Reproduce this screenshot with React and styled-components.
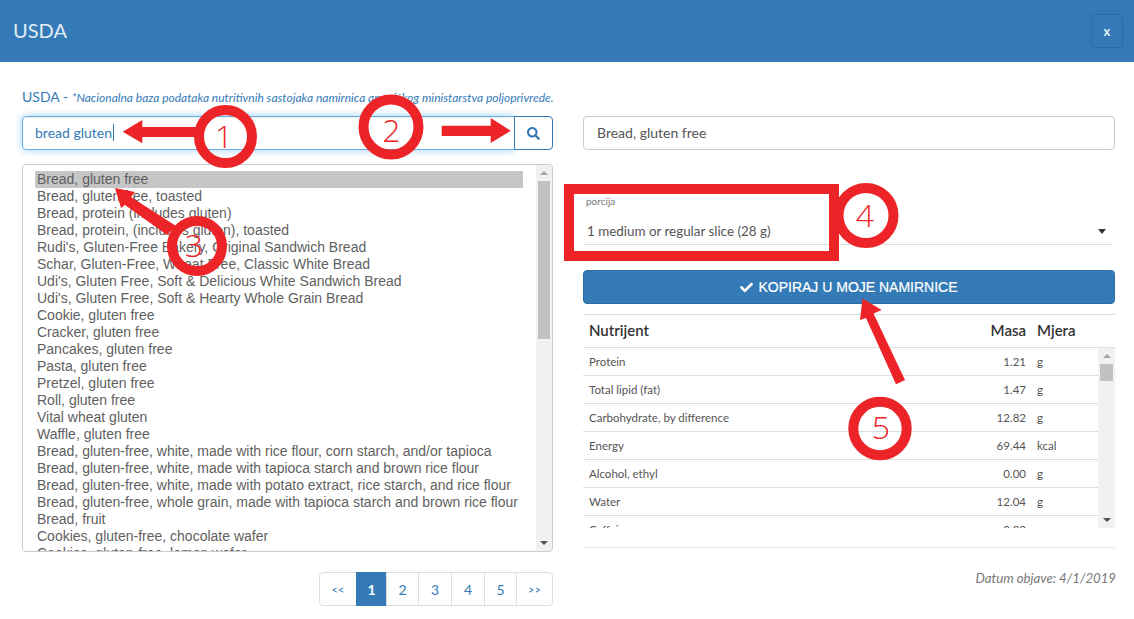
import React from 'react';
import styled, { createGlobalStyle } from 'styled-components';
import { FaSearch, FaCheck } from 'react-icons/fa';

const BLUE = '#337ab7';
const RED = '#ed2427';

const FOODS = [
    'Bread, gluten free',
    'Bread, gluten free, toasted',
    'Bread, protein (includes gluten)',
    'Bread, protein, (includes gluten), toasted',
    "Rudi's, Gluten-Free Bakery, Original Sandwich Bread",
    'Schar, Gluten-Free, Wheat Free, Classic White Bread',
    "Udi's, Gluten Free, Soft & Delicious White Sandwich Bread",
    "Udi's, Gluten Free, Soft & Hearty Whole Grain Bread",
    'Cookie, gluten free',
    'Cracker, gluten free',
    'Pancakes, gluten free',
    'Pasta, gluten free',
    'Pretzel, gluten free',
    'Roll, gluten free',
    'Vital wheat gluten',
    'Waffle, gluten free',
    'Bread, gluten-free, white, made with rice flour, corn starch, and/or tapioca',
    'Bread, gluten-free, white, made with tapioca starch and brown rice flour',
    'Bread, gluten-free, white, made with potato extract, rice starch, and rice flour',
    'Bread, gluten-free, whole grain, made with tapioca starch and brown rice flour',
    'Bread, fruit',
    'Cookies, gluten-free, chocolate wafer',
    'Cookies, gluten-free, lemon wafer',
];

const NUTRIENTS = [
    { name: 'Protein', mass: '1.21', unit: 'g' },
    { name: 'Total lipid (fat)', mass: '1.47', unit: 'g' },
    { name: 'Carbohydrate, by difference', mass: '12.82', unit: 'g' },
    { name: 'Energy', mass: '69.44', unit: 'kcal' },
    { name: 'Alcohol, ethyl', mass: '0.00', unit: 'g' },
    { name: 'Water', mass: '12.04', unit: 'g' },
    { name: 'Caffeine', mass: '0.00', unit: 'mg' },
];

const PAGES = [
    { label: '<<', cell: 38, small: true },
    { label: '1', cell: 31, active: true },
    { label: '2', cell: 33 },
    { label: '3', cell: 34 },
    { label: '4', cell: 34 },
    { label: '5', cell: 33 },
    { label: '>>', cell: 37, small: true },
];

const GlobalStyle = createGlobalStyle`
    html, body {
        margin: 0;
        padding: 0;
        background: #fff;
    }
    body {
        font-family: 'Lato', 'Liberation Sans', sans-serif;
        color: #555;
    }
`;

const Page = styled.div`
    position: relative;
    width: 1134px;
    height: 619px;
    overflow: hidden;
    background: #fff;
`;
const Header = styled.header`
    display: flex;
    align-items: center;
    justify-content: space-between;
    height: 62px;
    padding: 0 11px 0 13px;
    box-sizing: border-box;
    background: ${BLUE};
`;
const Title = styled.h1`
    margin: 0 0 2px;
    font-size: 20px;
    font-weight: 400;
    color: #e4edf5;
`;
const CloseButton = styled.button`
    width: 32px;
    height: 34px;
    padding: 0;
    border: 1px solid #2e6da4;
    border-radius: 4px;
    background: ${BLUE};
    color: #e8eff6;
    font-family: inherit;
    font-size: 13px;
    font-weight: 700;
`;
const Body = styled.div`
    display: grid;
    grid-template-columns: 531px 532px;
    column-gap: 30px;
    padding-left: 22px;
`;
const LeftColumn = styled.section`
    display: flex;
    flex-direction: column;
    padding-top: 26px;
`;
const RightColumn = styled.section`
    display: flex;
    flex-direction: column;
    padding-top: 54px;
`;
const Intro = styled.div`
    height: 18px;
    margin-bottom: 10px;
    font-size: 14px;
    line-height: 18px;
    white-space: nowrap;
    color: ${BLUE};
`;
const IntroNote = styled.em`
    font-size: 12px;
`;
const SearchGroup = styled.div`
    display: flex;
    height: 34px;
    margin-bottom: 14px;
`;
const SearchInput = styled.div`
    flex: 1;
    display: flex;
    align-items: center;
    padding: 0 0 1px 12px;
    border: 1px solid #66afe9;
    border-radius: 4px 0 0 4px;
    box-shadow: inset 0 1px 1px rgba(0, 0, 0, 0.075), 0 0 8px rgba(102, 175, 233, 0.6);
    font-size: 14px;
    color: ${BLUE};
`;
const Caret = styled.span`
    width: 1px;
    height: 17px;
    margin-left: 1px;
    background: ${BLUE};
`;
const SearchButton = styled.button`
    display: flex;
    align-items: center;
    justify-content: center;
    width: 39px;
    margin-left: -1px;
    padding: 0;
    border: 1px solid ${BLUE};
    border-radius: 0 4px 4px 0;
    background: #fff;
    color: ${BLUE};
    font-size: 13px;
`;
const ListBox = styled.div`
    display: flex;
    height: 388px;
    box-sizing: border-box;
    border: 1px solid #ccc;
    border-radius: 4px;
    overflow: hidden;
    font-family: 'Liberation Sans', Arial, sans-serif;
    font-size: 14px;
    line-height: 17px;
    color: #5f5f5f;
`;
const ListItems = styled.div`
    flex: 1;
    padding: 6px 13px 0 12px;
    overflow: hidden;
`;
const ListItem = styled.div`
    padding: 0 2px;
    white-space: nowrap;
    background: ${({ selected }) => (selected ? '#c6c6c6' : 'transparent')};
`;
const Scrollbar = styled.div`
    display: flex;
    flex-direction: column;
    align-items: center;
    flex: none;
    box-sizing: border-box;
    width: ${({ width }) => width}px;
    padding: 0 2px;
    background: #f1f1f1;
`;
const ScrollArrow = styled.div`
    flex: none;
    width: 0;
    height: 0;
    margin: 6px 0;
    border-left: 4px solid transparent;
    border-right: 4px solid transparent;
    border-bottom: ${({ down }) => (down ? '0' : '4px solid #a3a3a3')};
    border-top: ${({ down }) => (down ? '4px solid #505050' : '0')};
`;
const ScrollThumb = styled.div`
    flex: none;
    align-self: stretch;
    height: ${({ size }) => size}px;
    background: #c1c1c1;
`;
const ScrollSpacer = styled.div`
    flex: 1;
`;
const Pagination = styled.nav`
    display: flex;
    align-self: flex-end;
    height: 34px;
    margin-top: 20px;
`;
const PageLink = styled.a`
    display: flex;
    align-items: center;
    justify-content: center;
    box-sizing: border-box;
    width: ${({ cell }) => cell}px;
    margin-left: -1px;
    border: 1px solid ${({ active }) => (active ? BLUE : '#ddd')};
    background: ${({ active }) => (active ? BLUE : '#fff')};
    color: ${({ active }) => (active ? '#fff' : BLUE)};
    font-size: ${({ small }) => (small ? 11 : 14)}px;
    font-weight: ${({ active }) => (active ? 700 : 400)};
    &:first-child {
        margin-left: 0;
        border-radius: 4px 0 0 4px;
    }
    &:last-child {
        border-radius: 0 4px 4px 0;
    }
`;
const NameField = styled.div`
    display: flex;
    align-items: center;
    height: 34px;
    box-sizing: border-box;
    padding: 0 12px 2px 13px;
    border: 1px solid #ccc;
    border-radius: 4px;
    font-size: 14px;
    color: #555;
`;
const SelectField = styled.div`
    position: relative;
    height: 51px;
    margin: 44px 2px 0 0;
    padding-left: 3px;
    box-sizing: border-box;
    border-bottom: 1px solid #ddd;
`;
const SelectLabel = styled.div`
    padding-top: 1px;
    font-size: 10px;
    line-height: 12px;
    color: #777;
`;
const SelectValue = styled.div`
    display: flex;
    align-items: center;
    justify-content: space-between;
    height: 20px;
    margin-top: 14px;
    padding: 0 7px 0 1px;
    font-size: 13.4px;
    color: #555;
`;
const SelectCaret = styled.span`
    width: 0;
    height: 0;
    border-left: 4.5px solid transparent;
    border-right: 4.5px solid transparent;
    border-top: 5px solid #333;
`;
const CopyButton = styled.button`
    display: flex;
    align-items: center;
    justify-content: center;
    gap: 5px;
    height: 34px;
    margin-top: 25px;
    padding: 0;
    border: 1px solid #2e6da4;
    border-radius: 4px;
    background: ${BLUE};
    color: #fff;
    font-family: 'Liberation Sans', Arial, sans-serif;
    font-size: 14px;
    font-weight: 400;
    -webkit-text-stroke: 0.2px #fff;
`;
const Table = styled.div`
    margin-top: 10px;
    border-top: 1px solid #ddd;
`;
const HeadRow = styled.div`
    display: grid;
    grid-template-columns: 373px 70px 1fr;
    align-items: center;
    height: 30px;
    padding-bottom: 2px;
    border-bottom: 1px solid #ddd;
    font-size: 15px;
    font-weight: 600;
    color: #333;
`;
const TableScroll = styled.div`
    display: flex;
    height: 180px;
    overflow: hidden;
    padding-bottom: 19px;
    border-bottom: 1px solid #e8e8e8;
`;
const TableRows = styled.div`
    flex: 1;
    height: 180px;
    overflow: hidden;
`;
const Row = styled.div`
    display: grid;
    grid-template-columns: 373px 70px 1fr;
    align-items: center;
    height: 27px;
    border-bottom: 1px solid #ddd;
    font-size: 11.5px;
    color: #555;
`;
const NameCell = styled.div`
    padding-left: 6px;
`;
const MassCell = styled.div`
    text-align: right;
`;
const UnitCell = styled.div`
    padding-left: 11px;
`;
const PublishDate = styled.div`
    margin: 21px -1px 0 0;
    text-align: right;
    font-size: 13.2px;
    font-style: italic;
    line-height: 18px;
    color: #777;
`;
const Annotations = styled.svg`
    position: absolute;
    top: 0;
    left: 0;
    pointer-events: none;
`;
const Badge = styled.circle`
    fill: none;
    stroke: ${RED};
    stroke-width: 10;
`;
const BadgeNumber = styled.text`
    fill: ${RED};
    font-family: 'Open Sans', 'Lato', sans-serif;
    font-size: 32px;
    font-weight: 300;
    text-anchor: middle;
`;
const ArrowShape = styled.polygon`
    fill: ${RED};
`;
const FrameRect = styled.rect`
    fill: none;
    stroke: ${RED};
    stroke-width: 10;
`;

// ring centre and radius, then where the numeral sits
const BADGES = [
    { n: '1', x: 225.5, y: 136.5, r: 26.5, tx: 224, ty: 148 },
    { n: '2', x: 391, y: 127, r: 27.5, tx: 391.5, ty: 142 },
    { n: '3', x: 197, y: 246, r: 25, tx: 194, ty: 257 },
    { n: '4', x: 866, y: 215.5, r: 27.5, tx: 865, ty: 227 },
    { n: '5', x: 880, y: 428.5, r: 26.7, tx: 881, ty: 439 },
];

const ARROWS = [
    '122.7,131.7 142.3,120 142.3,127 200,127 200,137 142.3,137 142.3,143.3',
    '510.7,130.7 490.7,118 490.7,125.7 441.7,125.7 441.7,136 490.7,136 490.7,143',
    '115,188 135,192 131,197 176,226 167,235 125,205 121,208',
    '862.5,298.5 881.7,310 873.5,313.5 905,380 896,384.3 866,318 860,320',
];

const Overlay = () => (
    <Annotations width="1134" height="619" viewBox="0 0 1134 619">
        <FrameRect x="569" y="189" width="265" height="67" />
        {ARROWS.map((points) => (
            <ArrowShape key={points} points={points} />
        ))}
        {BADGES.map((badge) => (
            <g key={badge.n}>
                <Badge cx={badge.x} cy={badge.y} r={badge.r} />
                <BadgeNumber x={badge.tx} y={badge.ty}>
                    {badge.n}
                </BadgeNumber>
            </g>
        ))}
    </Annotations>
);

const App = () => (
    <Page>
        <GlobalStyle />
        <Header>
            <Title>USDA</Title>
            <CloseButton>x</CloseButton>
        </Header>
        <Body>
            <LeftColumn>
                <Intro>
                    USDA - <IntroNote>*Nacionalna baza podataka nutritivnih sastojaka namirnica američkog ministarstva poljoprivrede.</IntroNote>
                </Intro>
                <SearchGroup>
                    <SearchInput>
                        bread gluten
                        <Caret />
                    </SearchInput>
                    <SearchButton>
                        <FaSearch />
                    </SearchButton>
                </SearchGroup>
                <ListBox>
                    <ListItems>
                        {FOODS.map((food, index) => (
                            <ListItem key={food} selected={index === 0}>
                                {food}
                            </ListItem>
                        ))}
                    </ListItems>
                    <Scrollbar width={16}>
                        <ScrollArrow />
                        <ScrollThumb size={158} />
                        <ScrollSpacer />
                        <ScrollArrow down />
                    </Scrollbar>
                </ListBox>
                <Pagination>
                    {PAGES.map((page) => (
                        <PageLink key={page.label} cell={page.cell} active={page.active} small={page.small}>
                            {page.label}
                        </PageLink>
                    ))}
                </Pagination>
            </LeftColumn>
            <RightColumn>
                <NameField>Bread, gluten free</NameField>
                <SelectField>
                    <SelectLabel>porcija</SelectLabel>
                    <SelectValue>
                        1 medium or regular slice (28 g)
                        <SelectCaret />
                    </SelectValue>
                </SelectField>
                <CopyButton>
                    <FaCheck size={13} />
                    KOPIRAJ U MOJE NAMIRNICE
                </CopyButton>
                <Table>
                    <HeadRow>
                        <NameCell>Nutrijent</NameCell>
                        <MassCell>Masa</MassCell>
                        <UnitCell>Mjera</UnitCell>
                    </HeadRow>
                    <TableScroll>
                        <TableRows>
                            {NUTRIENTS.map((item) => (
                                <Row key={item.name}>
                                    <NameCell>{item.name}</NameCell>
                                    <MassCell>{item.mass}</MassCell>
                                    <UnitCell>{item.unit}</UnitCell>
                                </Row>
                            ))}
                        </TableRows>
                        <Scrollbar width={17}>
                            <ScrollArrow />
                            <ScrollThumb size={17} />
                            <ScrollSpacer />
                            <ScrollArrow down />
                        </Scrollbar>
                    </TableScroll>
                </Table>
                <PublishDate>Datum objave: 4/1/2019</PublishDate>
            </RightColumn>
        </Body>
        <Overlay />
    </Page>
);

export default App;
